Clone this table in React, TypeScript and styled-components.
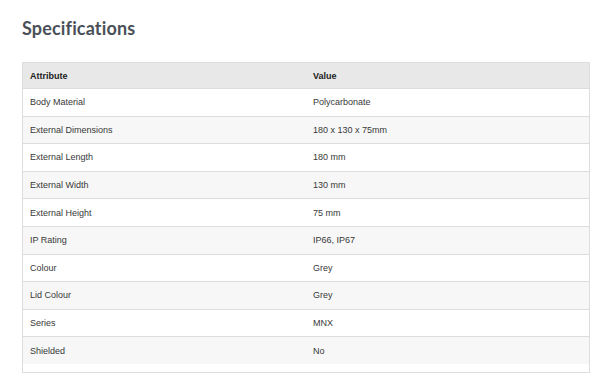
import React from 'react';
import styled, { createGlobalStyle } from 'styled-components';

const GlobalStyle = createGlobalStyle`
  body {
    margin: 0;
    background: #ffffff;
    font-family: 'Liberation Sans', Arial, sans-serif;
  }
`;

const Page = styled.div`
  padding: 16px 10px 0 22px;
`;

const Title = styled.h2`
  font-family: 'Lato', 'Liberation Sans', sans-serif;
  font-weight: 700;
  font-size: 18px;
  letter-spacing: 0.15px;
  color: #4a5058;
  margin: 0 0 22px;
  line-height: 24px;
`;

const TableBox = styled.div`
  width: 566px;
  border: 1px solid #dddddd;
  padding-bottom: 8px;
  background: #ffffff;
`;

const Table = styled.table`
  width: 100%;
  border-collapse: collapse;
  font-size: 9px;
  color: #383838;
`;

const HeadCell = styled.th`
  text-align: left;
  font-weight: 700;
  color: #222222;
  background: #e8e8e8;
  height: 25px;
  padding: 0 7px;
  width: 50%;
  border-bottom: 1px solid #dddddd;
`;

const Row = styled.tr<{ $striped: boolean }>`
  background: ${(p) => (p.$striped ? '#f7f7f7' : '#ffffff')};
  border-bottom: 1px solid #dddddd;

  &:last-child {
    border-bottom: none;
  }
`;

const Cell = styled.td`
  height: 26.6px;
  padding: 0 7px;
`;

const specs: [string, string][] = [
  ['Body Material', 'Polycarbonate'],
  ['External Dimensions', '180 x 130 x 75mm'],
  ['External Length', '180 mm'],
  ['External Width', '130 mm'],
  ['External Height', '75 mm'],
  ['IP Rating', 'IP66, IP67'],
  ['Colour', 'Grey'],
  ['Lid Colour', 'Grey'],
  ['Series', 'MNX'],
  ['Shielded', 'No'],
];

const App = () => {
  return (
    <>
      <GlobalStyle />
      <Page>
        <Title>Specifications</Title>
        <TableBox>
          <Table>
            <thead>
              <tr>
                <HeadCell>Attribute</HeadCell>
                <HeadCell>Value</HeadCell>
              </tr>
            </thead>
            <tbody>
              {specs.map(([name, value], i) => (
                <Row key={name} $striped={i % 2 === 1}>
                  <Cell>{name}</Cell>
                  <Cell>{value}</Cell>
                </Row>
              ))}
            </tbody>
          </Table>
        </TableBox>
      </Page>
    </>
  );
};

export default App;
